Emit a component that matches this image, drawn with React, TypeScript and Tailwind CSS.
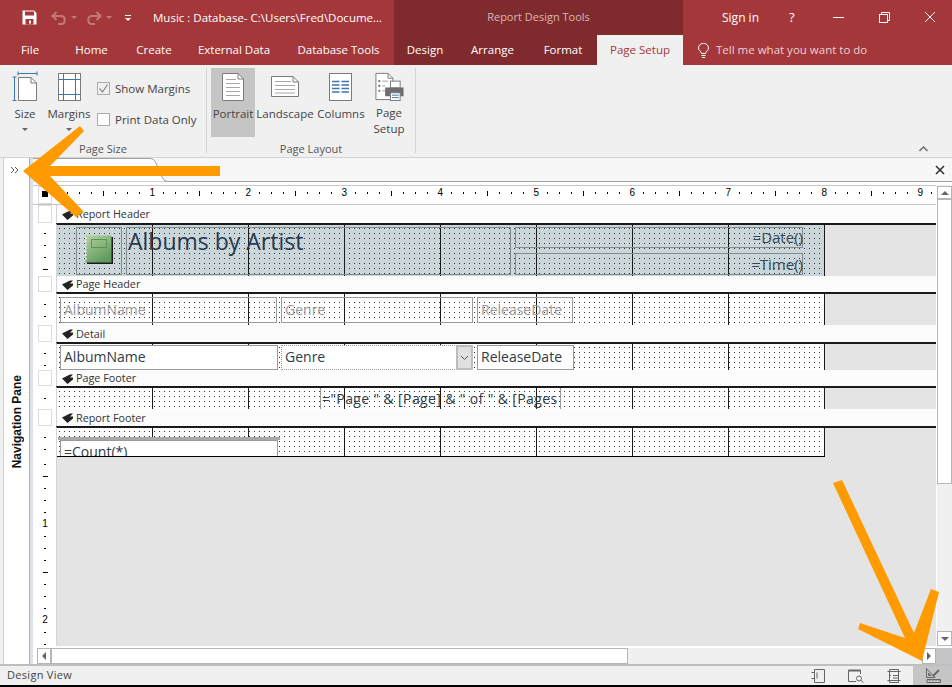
import React from "react";

const DOTS_WHITE =
  "bg-white bg-[image:linear-gradient(90deg,transparent_95px,#1a1a1a_95px),conic-gradient(at_1px_1px,transparent_75%,#333_0)] [background-size:96px_100%,5px_5px] [background-position:0_0,2px_3px]";
const DOTS_TEAL =
  "bg-[#cad6d9] bg-[image:linear-gradient(90deg,transparent_95px,#1a1a1a_95px),conic-gradient(at_1px_1px,transparent_75%,#333_0)] [background-size:96px_100%,5px_5px] [background-position:0_0,2px_3px]";

function Pennant() {
  return (
    <svg width="11" height="10" viewBox="0 0 11 10" className="shrink-0">
      <path d="M0 4.5L8 0.5H11L8 3.5H11V5.5L5.5 10Z" fill="#222" />
    </svg>
  );
}

function Tick({ kind }: { kind: string }) {
  return (
    <div className="h-[12px] w-full flex justify-center items-start relative">
      {kind === "d" && <span className="mt-0 w-[2px] h-[1px] bg-black" />}
      {kind === "h" && <span className="mt-0 w-[5px] h-[1px] bg-black" />}
      {kind !== "d" && kind !== "h" && (
        <span className="absolute -top-[6px] text-[10px] leading-[12px] text-black [font-family:'Liberation_Sans',sans-serif]">{kind}</span>
      )}
    </div>
  );
}

function SectionBar({ title, h }: { title: string; h: string }) {
  return (
    <div className={`flex ${h}`}>
      <div className="w-[23px] shrink-0 pl-[5px]">
        <div className="w-[14px] h-full border border-[#dcdcdc] bg-white" />
      </div>
      <div className="flex-1 border-l border-[#d4d4d4] bg-[#fcfcfc] flex items-center pl-[5px] pt-[1px] gap-[3px] text-[10.8px] text-[#333]">
        <Pennant />
        <span>{title}</span>
      </div>
    </div>
  );
}

function Band({
  h,
  ticks,
  pad,
  dots,
  bottom,
  children,
}: {
  h: string;
  ticks: string[];
  pad: string;
  dots: string;
  bottom?: boolean;
  children?: React.ReactNode;
}) {
  return (
    <div className={`flex ${h}`}>
      <div className="w-[23px] shrink-0 pl-[5px] bg-white overflow-hidden">
        <div className={`w-[14px] flex flex-col ${pad}`}>
          {ticks.map((k, i) => (
            <Tick key={i} kind={k} />
          ))}
        </div>
      </div>
      <div className="flex-1 border-l border-[#d4d4d4] border-t-2 border-t-[#1a1a1a] bg-[#e4e4e4]">
        <div className={`w-[768px] h-full relative overflow-hidden ${dots} ${bottom ? "border-b border-black" : ""}`}>{children}</div>
      </div>
    </div>
  );
}

function Ctl({ cls, text, tc }: { cls: string; text?: string; tc?: string }) {
  return (
    <div className={`absolute border border-[#9a9a9a] overflow-hidden whitespace-nowrap flex items-center pb-[2px] ${cls}`}>
      {text && <span className={`text-[14px] pl-[3px] ${tc || "text-[#2d3b4a]"}`}>{text}</span>}
    </div>
  );
}

function Ruler() {
  const cells = Array.from({ length: 74 }, (_, i) => i + 1);
  return (
    <div className="flex h-[18px]">
      <div className="w-[23px] shrink-0 pl-[5px]">
        <div className="w-[14px] h-full border border-[#dcdcdc] flex justify-center pt-[4px]">
          <span className="w-[6px] h-[6px] bg-black" />
        </div>
      </div>
      <div className="flex-1 flex overflow-hidden items-center pb-[4px]">
        {cells.map((i) => (
          <div key={i} className="w-[12px] shrink-0 h-[14px] flex justify-end items-center relative">
            {i % 8 === 0 ? (
              <span className="absolute right-[-3px] text-[10px] leading-[12px] text-black [font-family:'Liberation_Sans',sans-serif]">{i / 8}</span>
            ) : i % 4 === 0 ? (
              <span className="w-[1px] h-[5px] bg-black mr-[0px]" />
            ) : (
              <span className="w-[1px] h-[2px] bg-black" />
            )}
          </div>
        ))}
      </div>
    </div>
  );
}

const G = "#7b7b7b";
const B = "#3f74ae";

function SizeIcon() {
  return (
    <svg width="32" height="32" viewBox="0 0 32 32" fill="none">
      <path d="M9.5 7.5H22L27.5 13V30.5H9.5Z" fill="#fff" stroke={G} />
      <path d="M22 7.5V13H27.5" stroke={G} />
      <path d="M9 3.5H28M9 1.5V5.5M28 1.5V5.5M5.5 7V31M3.5 7H7.5M3.5 30.5H7.5" stroke={B} />
    </svg>
  );
}
function MarginsIcon() {
  return (
    <svg width="32" height="32" viewBox="0 0 32 32" fill="none">
      <rect x="5.5" y="3.5" width="22" height="27" fill="#fff" stroke={G} />
      <path d="M5.5 9.5H27.5M5.5 24.5H27.5" stroke={B} />
      <path d="M10.5 3.5V30.5M22.5 3.5V30.5" stroke={B} />
    </svg>
  );
}
function PortraitIcon() {
  return (
    <svg width="32" height="32" viewBox="0 0 32 32" fill="none">
      <path d="M5.5 3.5H21L26.5 9V30.5H5.5Z" fill="#fff" stroke={G} />
      <path d="M21 3.5V9H26.5" stroke={G} />
      <path d="M9 9.5H19M9 13.5H23M9 17.5H23M9 21.5H23M9 25.5H23" stroke="#a8a8a8" />
    </svg>
  );
}
function LandscapeIcon() {
  return (
    <svg width="32" height="32" viewBox="0 0 32 32" fill="none">
      <path d="M2.5 6.5H24L29.5 12V26.5H2.5Z" fill="#fff" stroke={G} />
      <path d="M24 6.5V12H29.5" stroke={G} />
      <path d="M6 11.5H22M6 15.5H26M6 19.5H26M6 23H26" stroke="#a8a8a8" />
    </svg>
  );
}
function ColumnsIcon() {
  return (
    <svg width="32" height="32" viewBox="0 0 32 32" fill="none">
      <rect x="4.5" y="3.5" width="22" height="27" fill="#fff" stroke={G} />
      <path d="M7 11.5H14.5M16.5 11.5H24M7 15H14.5M16.5 15H24M7 18.5H14.5M16.5 18.5H24M7 22H14.5M16.5 22H24" stroke={B} strokeWidth="1.4" />
    </svg>
  );
}
function PageSetupIcon() {
  return (
    <svg width="32" height="32" viewBox="0 0 32 32" fill="none">
      <path d="M2.5 3.5H15L20 8.5V30.5H2.5Z" fill="#fff" stroke={G} />
      <path d="M15 3.5V8.5H20" stroke={G} />
      <path d="M9 11.5H15M9 16.5H12M9 21.5H12" stroke="#a0a0a0" />
      <circle cx="6" cy="11.5" r="1.2" fill={G} />
      <circle cx="6" cy="16.5" r="1.2" fill={G} />
      <circle cx="6" cy="21.5" r="1.2" fill={G} />
      <rect x="17.5" y="11.5" width="10" height="7" fill="#fff" stroke={G} />
      <path d="M12 18H31V27H27V24H17V27H12Z" fill="#6d6d6d" />
      <rect x="17.5" y="23.5" width="10" height="8" fill="#fff" stroke={G} />
      <path d="M19 26H26M19 28.5H26" stroke={B} />
    </svg>
  );
}

function RibbonBtn({ icon, l1, l2, caret, w, active }: { icon: React.ReactNode; l1: string; l2?: string; caret?: boolean; w: string; active?: boolean }) {
  return (
    <div className={`${w} h-[69px] flex flex-col items-center pt-[2px] shrink-0 ${active ? "bg-[#c5c5c5]" : ""}`}>
      {icon}
      <div className="text-[11.5px] leading-[16px] mt-[4px] text-[#444] whitespace-nowrap text-center">{l1}</div>
      {l2 && <div className="text-[11.5px] leading-[16px] text-[#444] whitespace-nowrap">{l2}</div>}
      {caret && <div className="mt-[6px] w-0 h-0 border-x-[3px] border-x-transparent border-t-[3px] border-t-[#666]" />}
    </div>
  );
}

function Tab({ w, label }: { w: string; label: string }) {
  return <div className={`${w} shrink-0 flex items-center justify-center text-[11.5px] whitespace-nowrap text-white`}>{label}</div>;
}

export default function App() {
  const greyTicks = ["d", "h", "d", "d", "d", "1", "d", "d", "d", "h", "d", "d", "d", "2", "d", "d"];
  return (
    <div className="relative w-[952px] h-[687px] overflow-hidden bg-[#f0f0f0] [font-family:'Open_Sans',sans-serif] text-[11.5px]">
      {/* Title bar */}
      <div className="flex h-[35px] bg-[#a4373a]">
        <div className="w-[394px] shrink-0 flex items-center pl-[22px]">
          <svg width="15" height="15" viewBox="0 0 15 15" className="shrink-0 -mt-[1px]">
            <path d="M0.5 0.5H12L14.5 3V14.5H0.5Z" fill="#fff" />
            <rect x="3" y="1.5" width="9" height="4" fill="#a4373a" />
            <rect x="3.5" y="9" width="8" height="5.5" fill="#a4373a" />
            <rect x="7" y="10.5" width="2" height="3" fill="#fff" />
          </svg>
          <svg width="16" height="14" viewBox="0 0 16 14" className="ml-[14px] shrink-0" fill="none" stroke="#c4787a" strokeWidth="2">
            <path d="M5.5 1L1.5 5L5.5 9M1.5 5H10C15 5 15 13 10 13H7" />
          </svg>
          <div className="ml-[4px] w-0 h-0 border-x-[3px] border-x-transparent border-t-[3px] border-t-[#c4787a]" />
          <svg width="16" height="14" viewBox="0 0 16 14" className="ml-[9px] shrink-0" fill="none" stroke="#c4787a" strokeWidth="2">
            <path d="M10.5 1L14.5 5L10.5 9M14.5 5H6C1 5 1 13 6 13H9" />
          </svg>
          <div className="ml-[4px] w-0 h-0 border-x-[3px] border-x-transparent border-t-[3px] border-t-[#c4787a]" />
          <div className="ml-[13px] flex flex-col items-center gap-[2px]">
            <span className="w-[6px] h-[1px] bg-white" />
            <span className="w-0 h-0 border-x-[3px] border-x-transparent border-t-[3px] border-t-white" />
          </div>
          <span className="ml-[22px] text-white text-[11.5px] whitespace-nowrap">Music : Database- C:\Users\Fred\Docume...</span>
        </div>
        <div className="w-[289px] shrink-0 bg-[#7f2b2e] flex items-center justify-center text-[#d9b5b6] text-[11px]">Report Design Tools</div>
        <div className="flex-1 flex items-center text-white">
          <span className="ml-[39px] text-[12px]">Sign in</span>
          <span className="ml-[30px] text-[13px] w-[6px]">?</span>
          <span className="ml-[38px] w-[11px] h-[1px] bg-white" />
          <svg width="11" height="11" viewBox="0 0 11 11" className="ml-[35px] -mt-[1px]" fill="none" stroke="#fff">
            <path d="M2.5 2.5V0.5H10.5V8.5H8.5" />
            <rect x="0.5" y="2.5" width="8" height="8" />
          </svg>
          <svg width="12" height="12" viewBox="0 0 12 12" className="ml-[34px] -mt-[1px]" fill="none" stroke="#fff">
            <path d="M1 1L11 11M11 1L1 11" />
          </svg>
        </div>
      </div>
      {/* Tabs */}
      <div className="flex h-[30px] bg-[#a4373a]">
        <Tab w="w-[60px]" label="File" />
        <Tab w="w-[63px]" label="Home" />
        <Tab w="w-[62px]" label="Create" />
        <Tab w="w-[98px]" label="External Data" />
        <Tab w="w-[111px]" label="Database Tools" />
        <div className="flex bg-[#7f2b2e]">
          <Tab w="w-[62px]" label="Design" />
          <Tab w="w-[73px]" label="Arrange" />
          <Tab w="w-[68px]" label="Format" />
          <div className="w-[86px] bg-[#f0f0f0] text-[#a4373a] flex items-center justify-center whitespace-nowrap">Page Setup</div>
        </div>
        <div className="flex-1 flex items-center pl-[15px] gap-[7px] text-[#ecd0d1]">
          <svg width="11" height="15" viewBox="0 0 11 15" fill="none" stroke="#fff">
            <path d="M3.5 10.5C3 8 0.5 7.5 0.5 5A5 4.7 0 0 1 10.5 5C10.5 7.5 8 8 7.5 10.5ZM3.5 12.5H7.5M4 14.5H7" />
          </svg>
          <span className="whitespace-nowrap">Tell me what you want to do</span>
        </div>
      </div>
      {/* Ribbon */}
      <div className="h-[93px] border-b border-[#d2d2d2] bg-[#f0f0f0] flex relative">
        <div className="w-[207px] h-[85px] shrink-0 border-r border-[#d4d4d4] mt-[3px] flex flex-col pl-[4px]">
          <div className="flex">
            <RibbonBtn icon={<SizeIcon />} l1="Size" caret w="w-[42px]" />
            <RibbonBtn icon={<MarginsIcon />} l1="Margins" caret w="w-[46px]" />
            <div className="ml-[5px] flex flex-col gap-[14px] pt-[12px] text-[#444]">
              <div className="flex items-center gap-[5px] whitespace-nowrap">
                <span className="w-[13px] h-[13px] border border-[#ababab] flex items-center justify-center">
                  <svg width="11" height="11" viewBox="0 0 11 11" fill="none" stroke="#8a8a8a" strokeWidth="1.2">
                    <path d="M1.5 5.5L4.5 9L9.5 1.5" />
                  </svg>
                </span>
                Show Margins
              </div>
              <div className="flex items-center gap-[5px] whitespace-nowrap">
                <span className="w-[13px] h-[13px] border border-[#ababab] bg-white" />
                Print Data Only
              </div>
            </div>
          </div>
          <div className="mt-[4px] leading-[16px] text-center text-[11px] text-[#555] pr-[4px]">Page Size</div>
        </div>
        <div className="w-[209px] h-[85px] shrink-0 border-r border-[#d4d4d4] mt-[3px] flex flex-col pl-[4px]">
          <div className="flex">
            <RibbonBtn icon={<PortraitIcon />} l1="Portrait" w="w-[44px]" active />
            <RibbonBtn icon={<LandscapeIcon />} l1="Landscape" w="w-[60px]" />
            <RibbonBtn icon={<ColumnsIcon />} l1="Columns" w="w-[52px]" />
            <RibbonBtn icon={<PageSetupIcon />} l1="Page" l2="Setup" w="w-[44px]" />
          </div>
          <div className="mt-[4px] leading-[16px] text-center text-[11px] text-[#555] pr-[4px]">Page Layout</div>
        </div>
        <svg width="9" height="6" viewBox="0 0 9 6" className="absolute right-[24px] bottom-[5px]" fill="none" stroke="#777" strokeWidth="1.6">
          <path d="M0.5 5L4.5 1L8.5 5" />
        </svg>
      </div>
      {/* Work area */}
      <div className="flex h-[506px] bg-white">
        <div className="w-[3px] shrink-0 bg-[#f0f0f0]" />
        <div className="w-[26px] shrink-0 border-l border-[#cfcfcf] bg-white flex flex-col items-center">
          <svg width="10" height="8" viewBox="0 0 10 8" className="mt-[8px] -ml-[3px]" fill="none" stroke="#555">
            <path d="M1 1L4 4L1 7M5 1L8 4L5 7" />
          </svg>
          <div className="flex-1 flex items-center justify-center">
            <span className="[writing-mode:vertical-rl] rotate-180 text-[12px] font-bold text-[#111] whitespace-nowrap mt-[6px] [font-family:'Liberation_Sans',sans-serif]">Navigation Pane</span>
          </div>
        </div>
        <div className="w-[4px] shrink-0 bg-[#dde1e9] border-l border-[#aab0b8]" />
        <div className="flex-1 flex flex-col min-w-0">
          {/* doc tab strip */}
          <div className="h-[24px] bg-[#f7f7f7] border-b border-[#a0a0a0] flex items-start justify-end relative">
            <svg width="134" height="24" viewBox="0 0 134 24" className="absolute left-0 top-0">
              <path d="M0 0.5H116Q121 0.5 123 5L129 19Q131 23.5 134 23.5H0Z" fill="#fff" />
              <path d="M0 0.5H116Q121 0.5 123 5L129 19Q131 23.5 134 23.5" fill="none" stroke="#a0a0a0" />
            </svg>
            <svg width="10" height="10" viewBox="0 0 10 10" className="mr-[7px] mt-[7px]" fill="none" stroke="#333" strokeWidth="1.6">
              <path d="M1 1L9 9M9 1L1 9" />
            </svg>
          </div>
          <div className="h-[3px] shrink-0" />
          <div className="flex-1 flex min-h-0">
            <div className="flex-1 flex flex-col min-w-0">
              <div className="border-t border-[#c8c8c8]" />
              <div className="border-b border-[#c4c4c4]">
                <Ruler />
              </div>
              <SectionBar title="Report Header" h="h-[18px]" />
              <Band h="h-[53px]" ticks={["d", "d", "d", "h"]} pad="pt-[10px]" dots={DOTS_TEAL}>
                <Ctl cls="left-[19px] top-[2px] w-[46px] h-[48px] border-[#808c8e]" />
                <svg width="28" height="29" viewBox="0 0 28 29" className="absolute left-[28px] top-[10px]">
                  <defs>
                    <linearGradient id="nb" x1="0" y1="0" x2="0.6" y2="1">
                      <stop offset="0" stopColor="#b5d2a4" />
                      <stop offset="1" stopColor="#5f9a5c" />
                    </linearGradient>
                  </defs>
                  <rect x="2" y="2" width="26" height="27" fill="#1a1a1a" />
                  <rect x="0.5" y="0.5" width="26" height="27" fill="url(#nb)" />
                  <path d="M0.8 2V26" stroke="#f0f0f0" strokeWidth="1.6" strokeDasharray="2 1.4" />
                  <rect x="6.5" y="4.5" width="15" height="8" fill="none" stroke="#5d9559" />
                </svg>
                <Ctl cls="left-[69px] top-[2px] w-[385px] h-[48px] border-[#808c8e] items-start" />
                <span className="absolute left-[71px] top-[0px] text-[23px] leading-[32px] text-[#26394f] whitespace-nowrap">Albums by Artist</span>
                <Ctl cls="left-[458px] top-[2px] w-[288px] h-[21px] border-[#808c8e] justify-end" />
                <span className="absolute right-[22px] top-[2px] text-[15px] leading-[20px] text-[#34485c]">=Date()</span>
                <Ctl cls="left-[458px] top-[28px] w-[288px] h-[22px] border-[#808c8e] justify-end" />
                <span className="absolute right-[22px] top-[29px] text-[15px] leading-[20px] text-[#34485c]">=Time()</span>
              </Band>
              <SectionBar title="Page Header" h="h-[16px]" />
              <Band h="h-[33px]" ticks={["d", "d"]} pad="pt-[12px]" dots={DOTS_WHITE}>
                <Ctl cls="left-[3px] top-[3px] w-[217px] h-[26px]" text="AlbumName" tc="text-[#9a9a9a]" />
                <Ctl cls="left-[224px] top-[3px] w-[192px] h-[26px]" text="Genre" tc="text-[#9a9a9a]" />
                <Ctl cls="left-[420px] top-[3px] w-[96px] h-[26px]" text="ReleaseDate" tc="text-[#9a9a9a]" />
              </Band>
              <SectionBar title="Detail" h="h-[17px]" />
              <Band h="h-[28px]" ticks={["d", "d"]} pad="pt-[11px]" dots={DOTS_WHITE}>
                <Ctl cls="left-[3px] top-[1px] w-[218px] h-[25px] bg-white" text="AlbumName" />
                <Ctl cls="left-[224px] top-[1px] w-[192px] h-[25px] bg-white border-l-[#999] border-dotted" text="Genre" />
                <div className="absolute left-[399px] top-[1px] w-[17px] h-[25px] bg-[#e0e0e0] border-2 border-[#bdbdbd] flex items-center justify-center">
                  <svg width="9" height="6" viewBox="0 0 9 6" fill="none" stroke="#555">
                    <path d="M1 1L4.5 4.5L8 1" />
                  </svg>
                </div>
                <Ctl cls="left-[420px] top-[1px] w-[97px] h-[25px] bg-white" text="ReleaseDate" />
              </Band>
              <SectionBar title="Page Footer" h="h-[16px]" />
              <Band h="h-[23px]" ticks={["d"]} pad="pt-[12px]" dots={DOTS_WHITE}>
                <div className="absolute left-[263px] top-0 w-[241px] h-[21px] border-x border-[#9a9a9a] overflow-hidden whitespace-nowrap">
                  <span className="text-[14px] leading-[21px] text-[#2d3b4a] pl-[1px] tracking-[0.38px]">{'="Page " & [Page] & " of " & [Pages'}</span>
                </div>
              </Band>
              <SectionBar title="Report Footer" h="h-[17px]" />
              <Band h="h-[31px]" ticks={["d", "d"]} pad="pt-[11px]" dots={DOTS_WHITE} bottom>
                <div className="absolute left-[1px] top-[9px] w-[222px] h-[3px] bg-[#a8a8a8]" />
                <div className="absolute left-[3px] top-[12px] w-[218px] h-[20px] bg-white border border-[#9a9a9a] overflow-hidden">
                  <span className="block text-[14px] leading-[20px] pl-[3px] pt-[1px] text-[#2d3b4a]">=Count(*)</span>
                </div>
              </Band>
              <div className="flex h-[189px]">
                <div className="w-[23px] shrink-0 pl-[5px] overflow-hidden">
                  <div className="w-[14px] flex flex-col pt-[7px]">
                    {greyTicks.map((k, i) => (
                      <Tick key={i} kind={k} />
                    ))}
                  </div>
                </div>
                <div className="flex-1 border-l border-[#d4d4d4] bg-[#e4e4e4]" />
              </div>
            </div>
            {/* vertical scrollbar */}
            <div className="w-[16px] shrink-0 bg-[#f0f0f0] border-l border-white flex flex-col h-[461px] pt-[1px]">
              <div className="h-[13px] border border-[#b5b5b5] bg-white flex items-center justify-center">
                <span className="w-0 h-0 border-x-[4px] border-x-transparent border-b-[4px] border-b-[#666]" />
              </div>
              <div className="h-[285px] border border-[#b5b5b5] bg-white" />
              <div className="flex-1" />
              <div className="h-[15px] border border-[#b5b5b5] bg-white flex items-center justify-center">
                <span className="w-0 h-0 border-x-[4px] border-x-transparent border-t-[4px] border-t-[#666]" />
              </div>
            </div>
          </div>
          {/* horizontal scrollbar */}
          <div className="h-[18px] shrink-0 flex bg-white">
            <div className="w-[4px] shrink-0" />
            <div className="flex-1 flex bg-[#f0f0f0] border-t-2 border-white">
              <div className="w-[14px] h-[16px] border border-[#b5b5b5] bg-white flex items-center justify-center">
                <span className="w-0 h-0 border-y-[4px] border-y-transparent border-r-[4px] border-r-[#666]" />
              </div>
              <div className="w-[577px] h-[16px] border border-[#b5b5b5] bg-white" />
              <div className="flex-1" />
              <div className="w-[14px] h-[16px] border border-[#b5b5b5] bg-white flex items-center justify-center">
                <span className="w-0 h-0 border-y-[4px] border-y-transparent border-l-[4px] border-l-[#666]" />
              </div>
            </div>
            <div className="w-[16px] shrink-0 bg-[#c5c5c8] mt-[2px]" />
          </div>
        </div>
      </div>
      {/* Status bar */}
      <div className="h-[21px] border-t-2 border-[#bfbfbf] bg-[#f0f0f0] flex items-center">
        <span className="pl-[7px] text-[11px] text-[#444] tracking-[0.3px]">Design View</span>
        <div className="ml-auto flex h-full">
          <div className="w-[38px] flex items-center justify-center">
            <svg width="14" height="14" viewBox="0 0 14 14" fill="none" stroke="#666">
              <path d="M3.5 0.5H13.5V13.5H3.5ZM0.5 3.5H3.5M0.5 9.5H3.5M6 3.5V9.5" />
            </svg>
          </div>
          <div className="w-[38px] flex items-center justify-center">
            <svg width="16" height="14" viewBox="0 0 16 14" fill="none" stroke="#666">
              <path d="M0.5 1.5H12.5V5M0.5 1.5V12.5H8" />
              <path d="M0.5 1.5H12.5" strokeWidth="2" />
              <circle cx="11" cy="9.5" r="2.5" />
              <path d="M13 11.5L15.5 13.5" />
            </svg>
          </div>
          <div className="w-[38px] flex items-center justify-center">
            <svg width="14" height="14" viewBox="0 0 14 14" fill="none" stroke="#666">
              <path d="M2.5 0.5H11.5V13.5H2.5ZM0.5 2.5H13.5M0.5 11.5H13.5M6 6.5H11.5M2.5 6.5H4M6 9H11" />
            </svg>
          </div>
          <div className="w-[39px] bg-[#c5c5c5] flex items-center justify-center">
            <svg width="16" height="15" viewBox="0 0 16 15" fill="none" stroke="#666">
              <path d="M1.5 0.5V9.5H10ZM3.5 5V7.5H6ZM2 11.5H15.5V14.5H2ZM5 11.5V13M8 11.5V13M11 11.5V13M14 11.5V13" />
              <path d="M8 8L14 2" strokeWidth="1.8" />
            </svg>
          </div>
        </div>
      </div>
      <div className="h-[2px] bg-black" />
      {/* Annotation arrows */}
      <svg width="952" height="687" viewBox="0 0 952 687" className="absolute left-0 top-0 pointer-events-none">
        <polygon points="23,171 80,126 84,131 53,163 50,166 220,166 220,176 50,176 84,212 76,217" fill="#ff9a00" />
        <polygon points="833,483 842,480 914,633 931,589 939,592 922,661 858,629 860,623 905,638" fill="#ff9a00" />
      </svg>
    </div>
  );
}
